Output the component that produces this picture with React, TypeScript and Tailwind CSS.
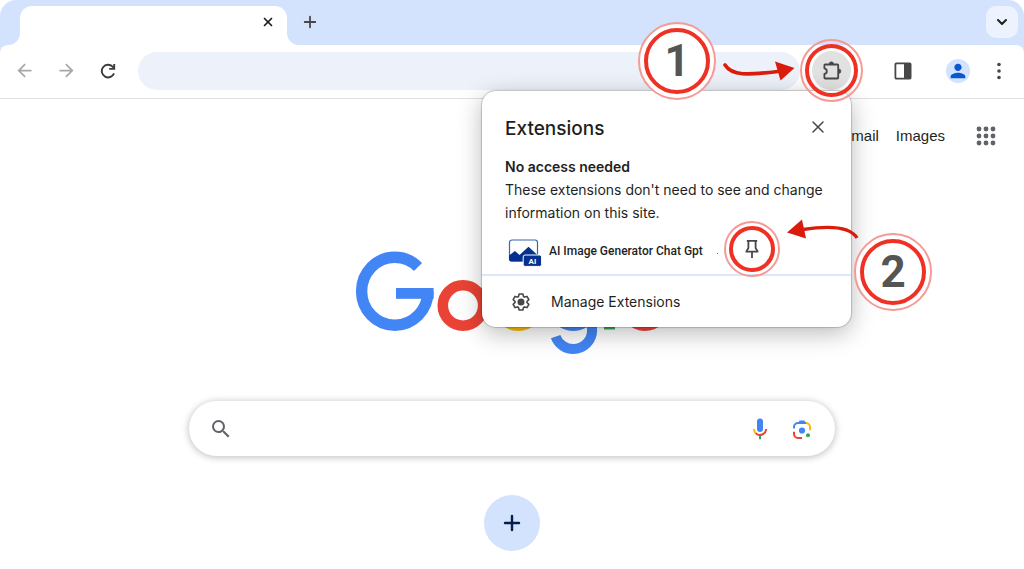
import type { ReactNode } from 'react';
import { MdArrowBack, MdArrowForward, MdPerson, MdSearch } from 'react-icons/md';
import { ChevronDown, Plus, X } from 'lucide-react';

const gearPoints = Array.from({ length: 6 }, (_, i) => i * 60 - 90)
  .flatMap((a) => [
    [a - 25, 6],
    [a - 13, 8.2],
    [a + 13, 8.2],
    [a + 25, 6],
  ])
  .map(([deg, r]) => {
    const rad = (deg * Math.PI) / 180;
    return `${10 + r * Math.cos(rad)},${10 + r * Math.sin(rad)}`;
  })
  .join(' ');

function GearIcon() {
  return (
    <svg width="20" height="20" viewBox="0 0 20 20" fill="none" aria-hidden="true">
      <polygon points={gearPoints} stroke="#474747" strokeWidth="1.6" strokeLinejoin="round" />
      <circle cx="10" cy="10" r="3.5" fill="#474747" />
    </svg>
  );
}

function ReloadIcon() {
  return (
    <svg width="16" height="16" viewBox="0 0 16 16" fill="none" stroke="#3c3c3c" strokeWidth="1.9" aria-hidden="true">
      <path d="M14 10.3A6.3 6.3 0 1 1 12.6 3.7L14 5.2" />
      <path d="M14.2 1V5.9H9.2" />
    </svg>
  );
}

function PuzzleIcon() {
  return (
    <svg width="20" height="20" viewBox="0 0 20 20" fill="none" aria-hidden="true">
      <path
        d="M3.2 3.5H15.4a.8.8 0 0 1 .8.8V16.7a.8.8 0 0 1-.8.8H3.2a.8.8 0 0 1-.8-.8V13c1.5-.3 2.4-1.4 2.4-2.8S3.9 7.7 2.4 7.4V4.3a.8.8 0 0 1 .8-.8z"
        stroke="#474747"
        strokeWidth="1.8"
        strokeLinejoin="round"
      />
      <path d="M7.2 3a2.2 2.2 0 0 1 4.4 0zM16.7 8a2.2 2.2 0 0 1 0 4.4z" fill="#474747" stroke="#474747" strokeWidth=".6" />
    </svg>
  );
}

function SidePanelIcon() {
  return (
    <svg width="18" height="18" viewBox="0 0 18 18" fill="none" aria-hidden="true">
      <rect x="1.4" y="1.4" width="15.2" height="15.2" rx="1" stroke="#474747" strokeWidth="1.8" />
      <rect x="10" y="1.4" width="6.6" height="15.2" fill="#474747" />
    </svg>
  );
}

function MenuIcon() {
  return (
    <svg width="4" height="18" viewBox="0 0 4 18" fill="#474747" aria-hidden="true">
      {[2.5, 9, 15.5].map((y) => (
        <circle key={y} cx="2" cy={y} r="1.8" />
      ))}
    </svg>
  );
}

function AppsIcon() {
  return (
    <svg width="20" height="20" viewBox="0 0 20 20" fill="#5f6368" aria-hidden="true">
      {[3, 10, 17].map((y) => [3, 10, 17].map((x) => <circle key={`${x}-${y}`} cx={x} cy={y} r="2.4" />))}
    </svg>
  );
}

function PinIcon() {
  return (
    <svg width="14" height="20" viewBox="0 0 14 20" fill="none" stroke="#474747" strokeWidth="1.8" aria-hidden="true">
      <path d="M1.8 1.9H12.2M3.4 1.9V9L1.3 12.6H12.7L10.6 9V1.9" strokeLinejoin="round" />
      <path d="M7 12.6V19" />
    </svg>
  );
}

function MicIcon() {
  return (
    <svg width="24" height="24" viewBox="0 0 24 24" aria-hidden="true">
      <rect x="9" y="1.6" width="6" height="13.4" rx="3" fill="#4285f4" />
      <path d="M11 18h2v4.3h-2z" fill="#34a853" />
      <path d="M6 12a6 6 0 0 0 1.8 4.2" fill="none" stroke="#fbbc05" strokeWidth="2" />
      <path d="M7.7 16.1A6 6 0 0 0 18 12" fill="none" stroke="#ea4335" strokeWidth="2" />
    </svg>
  );
}

function LensIcon() {
  return (
    <svg width="20" height="20" viewBox="0 0 20 20" fill="none" strokeWidth="2" aria-hidden="true">
      <path d="M2 9.5V8a4 4 0 0 1 4-4h8" stroke="#4285f4" />
      <path d="M6 4l1.7-2.6h4.6L14 4z" fill="#4285f4" />
      <path d="M14 4a4 4 0 0 1 4 4v3.3" stroke="#fbbc05" />
      <path d="M2 12.8V15a4 4 0 0 0 4 4h4" stroke="#ea4335" />
      <circle cx="10" cy="11.5" r="3.1" fill="#4285f4" />
      <circle cx="16" cy="16.3" r="2" fill="#34a853" />
    </svg>
  );
}

function ImageAiIcon() {
  return (
    <svg width="34" height="28" viewBox="0 0 34 28" aria-hidden="true">
      <rect x="1.5" y="1" width="28" height="21" rx="2.5" fill="#fff" stroke="#3767ad" strokeWidth="1.2" />
      <path d="M1 16.5L7 12L11.5 16L20.5 7.8L30 16.5V20a2.5 2.5 0 0 1-2.5 2.5H3.5A2.5 2.5 0 0 1 1 20z" fill="#06308f" />
      <rect x="15.2" y="16" width="18.4" height="11.4" rx="2" fill="#06308f" stroke="#fff" />
      <text x="24.4" y="24.6" textAnchor="middle" fill="#fff" fontSize="8" fontWeight="700" fontFamily="Roboto, sans-serif">
        AI
      </text>
    </svg>
  );
}

function GoogleLogo() {
  return (
    <svg width="316" height="106" viewBox="354 250 316 106" fill="none" role="img" aria-label="Google">
      <ellipse cx="394.8" cy="291.3" rx="33.2" ry="34" stroke="#4285f4" strokeWidth="11.4" pathLength="360" strokeDasharray="314 360" />
      <rect x="396" y="288" width="37.6" height="10.8" fill="#4285f4" />
      <circle cx="463" cy="305.5" r="20.2" stroke="#ea4335" strokeWidth="10.6" />
      <circle cx="518.3" cy="305.5" r="20.2" stroke="#fbbc05" strokeWidth="10.6" />
      <circle cx="573.3" cy="305.5" r="20.2" stroke="#4285f4" strokeWidth="10.6" />
      <rect x="587" y="281" width="10" height="50" fill="#4285f4" />
      <circle cx="573.3" cy="330.2" r="18.8" stroke="#4285f4" strokeWidth="10" pathLength="360" strokeDasharray="160 360" />
      <rect x="604" y="253" width="11" height="76.5" fill="#34a853" />
      <circle cx="645" cy="305.5" r="20.2" stroke="#ea4335" strokeWidth="10.6" pathLength="360" strokeDasharray="318 360" transform="rotate(24 645 305.5)" />
      <rect x="626" y="301" width="40" height="9" fill="#ea4335" transform="rotate(-22 645 305.5)" />
    </svg>
  );
}

// Double red ring that marks a step or a control
function Ring({ className, children }: { className: string; children?: ReactNode }) {
  return (
    <span className={`pointer-events-none absolute z-20 rounded-full border-2 border-[#f59a94] ${className}`}>
      <span className="flex size-full items-center justify-center rounded-full border-4 border-[#ee3124]">{children}</span>
    </span>
  );
}

function StepBadge({ step, className }: { step: number; className: string }) {
  return (
    <Ring className={`size-[78px] bg-white p-1 ${className}`}>
      <span className="font-[Roboto,sans-serif] text-[44px] leading-none font-bold text-[#555]">{step}</span>
    </Ring>
  );
}

function TabStrip() {
  return (
    <div className="flex h-[45px] items-end bg-[#d3e3fd] pl-2">
      <svg className="size-3" viewBox="0 0 12 12" fill="#fff" aria-hidden="true">
        <path d="M12 0V12H0A12 12 0 0 0 12 0z" />
      </svg>
      <div className="flex h-[39px] w-[267px] items-start justify-end rounded-t-xl bg-white pt-2 pr-[11px]">
        <button aria-label="Close tab" className="flex size-4 items-center justify-center">
          <X size={14} strokeWidth={3} className="text-[#1f1f1f]" />
        </button>
      </div>
      <svg className="size-3" viewBox="0 0 12 12" fill="#fff" aria-hidden="true">
        <path d="M0 0V12H12A12 12 0 0 1 0 0z" />
      </svg>
      <button aria-label="New tab" className="mb-[13px] ml-px flex size-5 items-center justify-center">
        <Plus size={18} strokeWidth={2.4} className="text-[#474747]" />
      </button>
      <button aria-label="Search tabs" className="mr-[6px] mb-[7px] ml-auto flex size-8 items-center justify-center rounded-[10px] bg-[#ecf3fe]">
        <ChevronDown size={16} strokeWidth={3} className="text-[#1f1f1f]" />
      </button>
    </div>
  );
}

function Toolbar() {
  return (
    <div className="bg-[#d3e3fd]">
      <div className="flex h-[54px] items-center rounded-t-lg border-b border-[#dfe1e5] bg-white pr-[13px] pb-[2px] pl-1">
        <div className="flex gap-[2px] text-[#a8a8a8]">
          <button aria-label="Back" className="flex size-10 items-center justify-center">
            <MdArrowBack size={21} />
          </button>
          <button aria-label="Forward" className="flex size-10 items-center justify-center">
            <MdArrowForward size={21} />
          </button>
          <button aria-label="Reload" className="flex size-10 items-center justify-center">
            <ReloadIcon />
          </button>
        </div>
        <input aria-label="Address" type="text" className="ml-[10px] h-[38px] min-w-0 flex-1 rounded-full bg-[#ecf1fa] px-5 text-sm outline-none" />
        <button aria-label="Extensions" className="relative ml-3 flex size-[39px] items-center justify-center rounded-full bg-[#e1e1e1]">
          <PuzzleIcon />
          <Ring className="-inset-3 p-[3px]" />
        </button>
        <button aria-label="Side panel" className="ml-8 flex size-10 items-center justify-center">
          <SidePanelIcon />
        </button>
        <button aria-label="Profile" className="ml-[23px] flex size-6 items-center justify-center rounded-full bg-[#d3e3fd] text-[#0b57d0]">
          <MdPerson size={22} />
        </button>
        <button aria-label="Menu" className="ml-[17px] flex size-6 items-center justify-center">
          <MenuIcon />
        </button>
      </div>
    </div>
  );
}

function ExtensionsPopup() {
  return (
    <section
      aria-label="Extensions"
      className="absolute top-[91px] right-[173px] z-10 w-[369px] rounded-[14px] bg-white font-[Inter,sans-serif] text-sm text-[#1f1f1f] shadow-[0_0_1px_1px_rgba(0,0,0,0.18),0_6px_24px_rgba(0,0,0,0.28)]"
    >
      <div className="px-[23px] pt-6">
        <div className="flex items-start justify-between">
          <h2 className="text-[19px] leading-7 font-medium">Extensions</h2>
          <button aria-label="Close" className="mt-[2px] flex size-5 items-center justify-center">
            <X size={20} strokeWidth={1.8} className="text-[#474747]" />
          </button>
        </div>
        <h3 className="mt-3 leading-[23px] font-semibold">No access needed</h3>
        <p className="leading-[23px]">These extensions don't need to see and change information on this site.</p>
      </div>
      <div className="flex h-[52px] items-center border-b-2 border-[#dbe8fb] pr-[71px] pl-[26px]">
        <div className="flex items-end gap-[7px] pt-2">
          <ImageAiIcon />
          <span className="pb-2 font-[Roboto,sans-serif] text-xs font-medium whitespace-nowrap">AI Image Generator Chat Gpt</span>
        </div>
        <span className="mt-2 ml-auto size-px bg-[#777]" />
        <button aria-label="Pin extension" className="relative ml-[6px] flex size-14 shrink-0 items-center justify-center">
          <PinIcon />
          <Ring className="inset-0 p-[3px]" />
        </button>
      </div>
      <button className="flex h-[51px] w-full items-center gap-5 pl-[29px]">
        <GearIcon />
        Manage Extensions
      </button>
    </section>
  );
}

export default function App() {
  return (
    <div className="relative overflow-hidden rounded-2xl bg-white">
      <TabStrip />
      <Toolbar />
      <ExtensionsPopup />

      <StepBadge step={1} className="top-[22px] right-[308px]" />
      <svg className="absolute top-[56px] right-[228px] z-20" width="76" height="28" viewBox="720 56 76 28" aria-hidden="true">
        <path d="M725 65C732 76 747 75 778 71.5" fill="none" stroke="#d91c0c" strokeWidth="3.6" strokeLinecap="round" />
        <path d="M775 61.5L794.5 68L780.5 80.5z" fill="#d91c0c" />
      </svg>

      <StepBadge step={2} className="top-[233px] right-[92px]" />
      <svg className="absolute top-[218px] right-[164px] z-20" width="76" height="24" viewBox="784 218 76 24" aria-hidden="true">
        <path d="M857 238C851 228 832 225 803 229.5" fill="none" stroke="#d91c0c" strokeWidth="3.4" />
        <path d="M787 232.5L802 219.5L806 238.5z" fill="#d91c0c" />
      </svg>

      <main className="flex flex-col items-center pt-[21px] pb-[18px] font-['Liberation_Sans',sans-serif] text-[#1f1f1f]">
        <nav className="flex h-8 items-center gap-[17px] self-end pr-[28px] text-[15px]">
          <a href="#mail">Gmail</a>
          <a href="#images">Images</a>
          <button aria-label="Google apps" className="ml-[14px]">
            <AppsIcon />
          </button>
        </nav>
        <div className="mt-[98px]">
          <GoogleLogo />
        </div>
        <form className="mt-[45px] flex h-[55px] w-full max-w-[646px] items-center rounded-full bg-white pr-[23px] pl-5 shadow-[0_1px_6px_1px_rgba(32,33,36,0.25)]">
          <MdSearch size={24} className="text-[#5f6368]" />
          <input aria-label="Search" type="text" className="mx-3 min-w-0 flex-1 outline-none" />
          <button type="button" aria-label="Search by voice">
            <MicIcon />
          </button>
          <button type="button" aria-label="Search by image" className="ml-5">
            <LensIcon />
          </button>
        </form>
        <button aria-label="Add shortcut" className="mt-[39px] flex size-14 items-center justify-center rounded-full bg-[#d3e3fd]">
          <Plus size={24} strokeWidth={2.4} className="text-[#041e49]" />
        </button>
      </main>
    </div>
  );
}
